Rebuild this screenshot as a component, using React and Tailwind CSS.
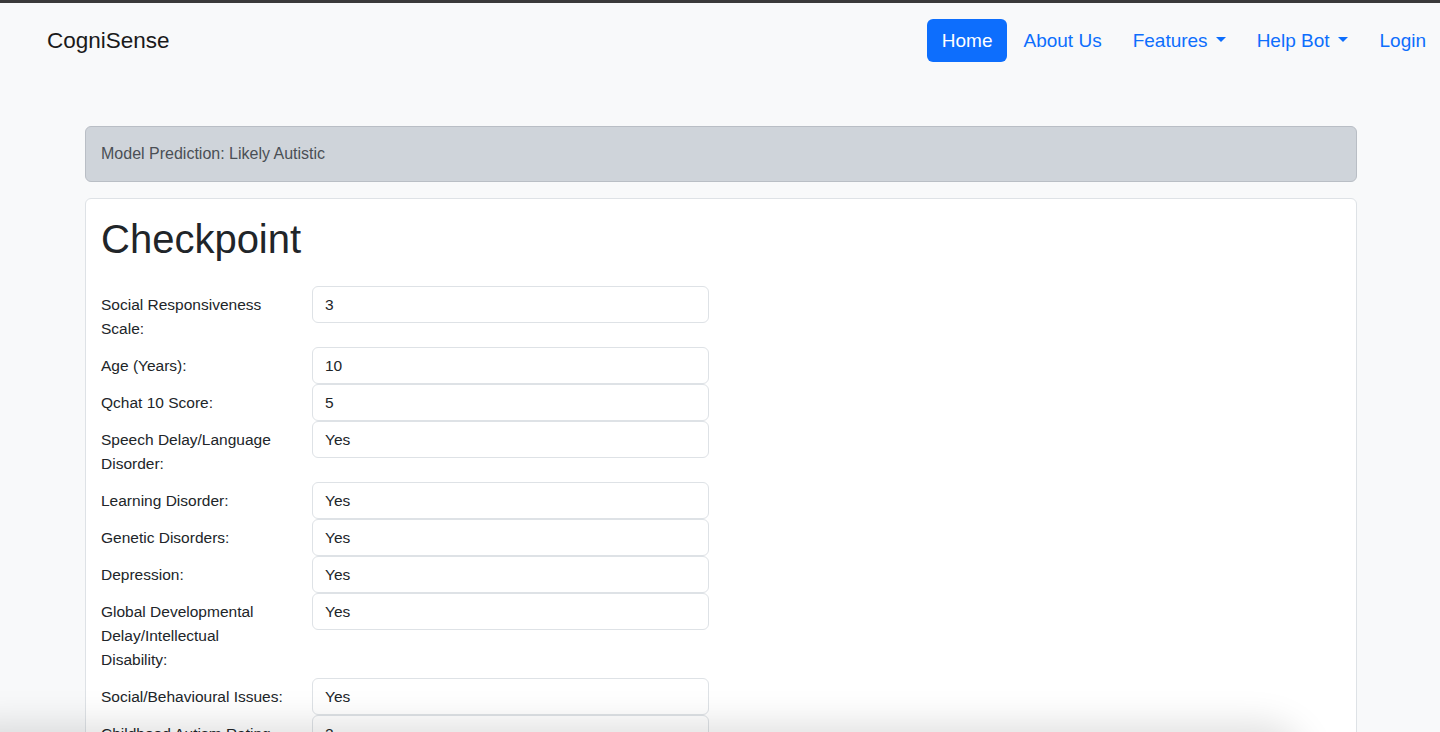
import React from "react";

const rows = [
  ["Social Responsiveness Scale:", "3"],
  ["Age (Years):", "10"],
  ["Qchat 10 Score:", "5"],
  ["Speech Delay/Language Disorder:", "Yes"],
  ["Learning Disorder:", "Yes"],
  ["Genetic Disorders:", "Yes"],
  ["Depression:", "Yes"],
  ["Global Developmental Delay/Intellectual Disability:", "Yes"],
  ["Social/Behavioural Issues:", "Yes"],
  ["Childhood Autism Rating Scale:", "2"],
  ["Anxiety Disorder:", "Yes"],
  ["Sex:", "M"],
];

function Caret() {
  return (
    <span className="ml-[8px] inline-block w-0 h-0 border-l-[5.5px] border-r-[5.5px] border-t-[5.5px] border-l-transparent border-r-transparent border-t-[#0d6efd] align-middle relative top-[-2px]"></span>
  );
}

export default function App() {
  return (
    <div
      className="relative h-screen overflow-hidden bg-[#f8f9fa] text-[#212529]"
      style={{ fontFamily: '"Liberation Sans", Arial, sans-serif' }}
    >
      <div className="h-[3px] bg-[#3a3a3a]"></div>
      <nav className="flex items-center justify-between h-[59px] pt-[16px] pl-[47px] pr-[14px]">
        <div className="text-[22.5px] leading-[42px] pt-[1px] text-[#1a1a1a]">CogniSense</div>
        <div className="flex items-center text-[19px] text-[#0d6efd]">
          <a className="h-[43px] pt-[2px] px-[15px] flex items-center rounded-[6px] bg-[#0d6efd] text-white">Home</a>
          <a className="px-[16px] pt-[2px] flex items-center">About Us</a>
          <a className="px-[15px] pt-[2px] flex items-center">Features<Caret /></a>
          <a className="px-[16px] pt-[2px] flex items-center">Help Bot<Caret /></a>
          <a className="pl-[16px] pt-[2px] flex items-center">Login</a>
        </div>
      </nav>

      <main className="ml-[85px] w-[1272px] pt-[64px]">
        <div className="h-[56px] px-[15px] flex items-center rounded-[6px] border border-[#b9bec5] bg-[#cfd4da] text-[16px] text-[#4a4f55]">
          Model Prediction: Likely Autistic
        </div>

        <div className="mt-[16px] rounded-[6px] border border-[#dee2e6] bg-white px-[15px] pt-[16px] pb-[16px]">
          <h1 className="text-[40px] leading-[48px] font-normal text-[#212529] mb-[23px]">Checkpoint</h1>
          <div className="flex flex-col">
            {rows.map(([label, value]) => (
              <div key={label} className="flex items-start">
                <label className="w-[211px] pr-[27px] pt-[7px] pb-[6px] text-[15.5px] leading-[24px] text-[#212529]">
                  {label}
                </label>
                <div className="w-[397px] h-[37px] rounded-[6px] border border-[#dee2e6] bg-white px-[12px] flex items-center text-[15.5px] text-[#212529]">
                  {value}
                </div>
              </div>
            ))}
          </div>
        </div>
      </main>

      <div className="absolute left-[-40px] top-[738px] w-[1330px] h-[80px] rounded-[28px] bg-white shadow-[0_0_36px_14px_rgba(0,0,0,0.13)]"></div>
    </div>
  );
}
